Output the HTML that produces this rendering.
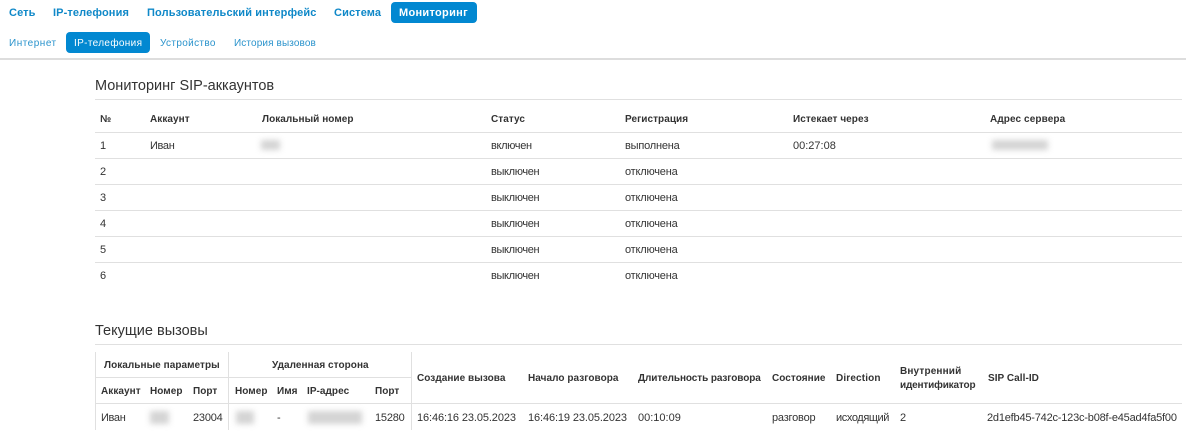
<!DOCTYPE html>
<html><head><meta charset="utf-8"><style>
html,body{margin:0;padding:0;background:#fff;width:1186px;height:436px;overflow:hidden}
body{position:relative;font-family:"Liberation Sans",Arial,sans-serif;font-size:11px;color:#333}
.t{position:absolute;white-space:nowrap;line-height:14px}
.b{font-weight:bold;font-size:10px;letter-spacing:.05px}
.o{letter-spacing:-.2px}
.w{letter-spacing:-.35px}
.n{position:absolute;white-space:nowrap;font-weight:bold;font-size:11px;letter-spacing:.12px;line-height:14px;color:#0f88c8}
.s{position:absolute;white-space:nowrap;font-size:10px;line-height:14px;color:#2a93cc}
.p{position:absolute;background:#0288d1;border-radius:4px}
.h{position:absolute;height:1px;background:#e0e0e0}
.v{position:absolute;width:1px;background:#e0e0e0}
.h1{position:absolute;white-space:nowrap;font-size:14.5px;line-height:20px;color:#333}
.bl{position:absolute;background:#d4d4d4;filter:blur(3px)}
</style></head><body>
<div class="p" style="left:391px;top:2px;width:86px;height:21px"></div>
<div class="n" style="left:9px;top:6px">Сеть</div>
<div class="n" style="left:53px;top:6px">IP-телефония</div>
<div class="n" style="left:147px;top:6px">Пользовательский интерфейс</div>
<div class="n" style="left:334px;top:6px">Система</div>
<div class="n" style="left:399px;top:6px;color:#fff;letter-spacing:.3px">Мониторинг</div>
<div class="p" style="left:66px;top:32px;width:84px;height:21px"></div>
<div class="s" style="left:9px;top:37px;letter-spacing:.5px">Интернет</div>
<div class="s" style="left:74px;top:37px;color:#fff;letter-spacing:.35px">IP-телефония</div>
<div class="s" style="left:160px;top:37px;letter-spacing:.35px">Устройство</div>
<div class="s" style="left:234px;top:37px;letter-spacing:.12px">История вызовов</div>
<div class="h" style="left:0;top:58px;width:1186px;height:2px;background:#ddd"></div>

<div class="h1" style="left:95px;top:76px">Мониторинг SIP-аккаунтов</div>
<div class="h" style="left:95px;top:99px;width:1087px"></div>
<div class="t b" style="left:100px;top:113px">№</div>
<div class="t b" style="left:150px;top:113px">Аккаунт</div>
<div class="t b" style="left:262px;top:113px">Локальный номер</div>
<div class="t b" style="left:491px;top:113px">Статус</div>
<div class="t b" style="left:625px;top:113px">Регистрация</div>
<div class="t b" style="left:793px;top:113px">Истекает через</div>
<div class="t b" style="left:990px;top:113px;letter-spacing:.1px">Адрес сервера</div>
<div class="h" style="left:95px;top:132px;width:1087px"></div>
<div class="t" style="left:100px;top:139px">1</div>
<div class="t w" style="left:150px;top:139px">Иван</div>
<div class="bl" style="left:261px;top:140px;width:19px;height:10px"></div>
<div class="t w" style="left:491px;top:139px">включен</div>
<div class="t o" style="left:625px;top:139px">выполнена</div>
<div class="t" style="left:793px;top:139px">00:27:08</div>
<div class="bl" style="left:992px;top:140px;width:56px;height:10px"></div>
<div class="h" style="left:95px;top:158px;width:1087px"></div>
<div class="t" style="left:100px;top:165px">2</div>
<div class="t w" style="left:491px;top:165px">выключен</div>
<div class="t o" style="left:625px;top:165px">отключена</div>
<div class="h" style="left:95px;top:184px;width:1087px"></div>
<div class="t" style="left:100px;top:191px">3</div>
<div class="t w" style="left:491px;top:191px">выключен</div>
<div class="t o" style="left:625px;top:191px">отключена</div>
<div class="h" style="left:95px;top:210px;width:1087px"></div>
<div class="t" style="left:100px;top:217px">4</div>
<div class="t w" style="left:491px;top:217px">выключен</div>
<div class="t o" style="left:625px;top:217px">отключена</div>
<div class="h" style="left:95px;top:236px;width:1087px"></div>
<div class="t" style="left:100px;top:243px">5</div>
<div class="t w" style="left:491px;top:243px">выключен</div>
<div class="t o" style="left:625px;top:243px">отключена</div>
<div class="h" style="left:95px;top:262px;width:1087px"></div>
<div class="t" style="left:100px;top:269px">6</div>
<div class="t w" style="left:491px;top:269px">выключен</div>
<div class="t o" style="left:625px;top:269px">отключена</div>

<div class="h1" style="left:95px;top:321px">Текущие вызовы</div>
<div class="h" style="left:95px;top:344px;width:1087px"></div>
<div class="v" style="left:95px;top:352px;height:78px"></div>
<div class="v" style="left:228px;top:352px;height:78px"></div>
<div class="v" style="left:411px;top:352px;height:78px"></div>
<div class="h" style="left:95px;top:377px;width:316px"></div>
<div class="h" style="left:95px;top:403px;width:1087px"></div>
<div class="t b" style="left:104px;top:359px">Локальные параметры</div>
<div class="t b" style="left:272px;top:359px">Удаленная сторона</div>
<div class="t b" style="left:101px;top:385px">Аккаунт</div>
<div class="t b" style="left:150px;top:385px">Номер</div>
<div class="t b" style="left:193px;top:385px">Порт</div>
<div class="t b" style="left:235px;top:385px">Номер</div>
<div class="t b" style="left:277px;top:385px">Имя</div>
<div class="t b" style="left:307px;top:385px">IP-адрес</div>
<div class="t b" style="left:375px;top:385px">Порт</div>
<div class="t b" style="left:417px;top:372px">Создание вызова</div>
<div class="t b" style="left:528px;top:372px">Начало разговора</div>
<div class="t b" style="left:638px;top:372px;letter-spacing:-.09px">Длительность разговора</div>
<div class="t b" style="left:772px;top:372px">Состояние</div>
<div class="t b" style="left:836px;top:372px;letter-spacing:.15px">Direction</div>
<div class="t b" style="left:900px;top:365px;letter-spacing:.15px">Внутренний</div>
<div class="t b" style="left:900px;top:379px;letter-spacing:-.17px">идентификатор</div>
<div class="t b" style="left:988px;top:372px">SIP Call-ID</div>
<div class="t w" style="left:101px;top:411px">Иван</div>
<div class="bl" style="left:150px;top:411px;width:19px;height:13px"></div>
<div class="t" style="left:193px;top:411px;letter-spacing:-.2px">23004</div>
<div class="bl" style="left:236px;top:411px;width:18px;height:13px"></div>
<div class="t" style="left:277px;top:411px">-</div>
<div class="bl" style="left:308px;top:411px;width:54px;height:13px"></div>
<div class="t" style="left:375px;top:411px;letter-spacing:-.2px">15280</div>
<div class="t" style="left:417px;top:411px;letter-spacing:-.11px">16:46:16 23.05.2023</div>
<div class="t" style="left:528px;top:411px;letter-spacing:-.11px">16:46:19 23.05.2023</div>
<div class="t" style="left:638px;top:411px">00:10:09</div>
<div class="t o" style="left:772px;top:411px">разговор</div>
<div class="t" style="left:836px;top:411px;letter-spacing:-.4px">исходящий</div>
<div class="t" style="left:900px;top:411px">2</div>
<div class="t" style="left:987px;top:411px;letter-spacing:-.2px">2d1efb45-742c-123c-b08f-e45ad4fa5f00</div>
</body></html>
